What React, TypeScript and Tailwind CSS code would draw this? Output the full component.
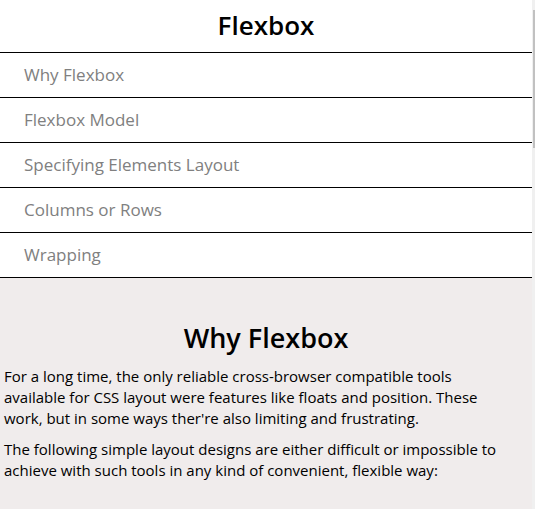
const links = ["Why Flexbox", "Flexbox Model", "Specifying Elements Layout", "Columns or Rows", "Wrapping"]

export default function App() {
  return (
    <div className="flex min-h-screen bg-[#f0ecec] font-['Open_Sans',sans-serif] text-black">
      <div className="flex-1">
        <header className="bg-white">
          <h1 className="flex h-[53px] items-center justify-center border-b border-black pb-[2px] text-[26px] font-semibold">
            Flexbox
          </h1>
          <nav>
            <ul>
              {links.map((l) => (
                <li key={l} className="flex h-[45px] items-center border-b border-black pl-6 text-[17px] text-[#808080]">
                  {l}
                </li>
              ))}
            </ul>
          </nav>
        </header>
        <main className="px-1 pt-[42px] pb-8">
          <h2 className="text-center text-[27px] font-semibold leading-[36px]">Why Flexbox</h2>
          <div className="w-[505px] text-[15px] leading-[21.3px]">
            <p className="mt-[9.5px]">
              For a long time, the only reliable cross-browser compatible tools available for CSS layout were features
              like floats and position. These work, but in some ways ther're also limiting and frustrating.
            </p>
            <p className="mt-[9.5px]">
              The following simple layout designs are either difficult or impossible to achieve with such tools in any
              kind of convenient, flexible way:
            </p>
          </div>
        </main>
      </div>
      <div className="w-[3px] bg-[#f0f0f0] pt-[10px]">
        <div className="ml-px h-[138px] w-[2px] bg-[#c1c1c1]" />
      </div>
    </div>
  )
}
